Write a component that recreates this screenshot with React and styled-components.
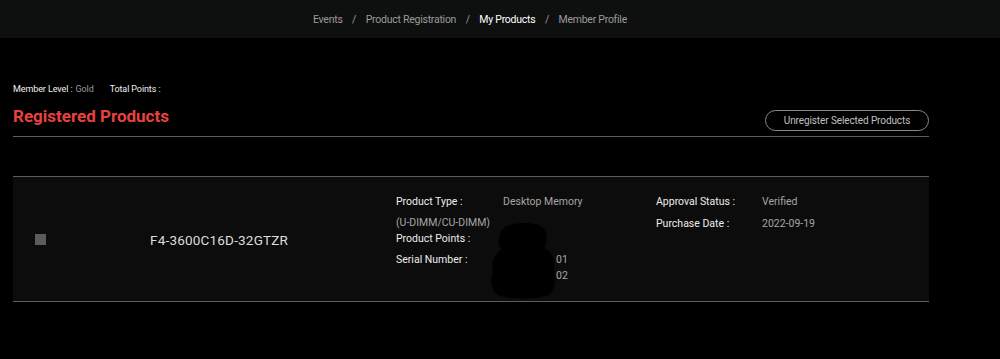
import React from "react";
import styled, { createGlobalStyle } from "styled-components";

const Global = createGlobalStyle`
  html, body { margin: 0; padding: 0; background: #000; }
  body { font-family: "Roboto", "Noto Sans", sans-serif; color: #ddd; }
  * { box-sizing: border-box; }
`;

const Page = styled.div`
  width: 1000px;
  height: 359px;
  background: #000;
  overflow: hidden;
`;

const TopBar = styled.nav`
  height: 38px;
  background: #0e0f0f;
  display: flex;
  align-items: center;
  padding-left: 313px;
  font-size: 10.5px;
  letter-spacing: -0.25px;
`;

const NavItem = styled.span`
  color: ${(p) => (p.$active ? "#ffffff" : "#9c9c9c")};
`;

const Sep = styled.span`
  color: #9c9c9c;
  margin: 0 9.5px;
`;

const Content = styled.main`
  width: 916px;
  margin-left: 13px;
  padding-top: 44px;
`;

const Meta = styled.div`
  display: flex;
  gap: 16px;
  font-size: 9px;
  line-height: 14px;
  color: #f0f0f0;
  letter-spacing: -0.1px;
`;

const MetaValue = styled.span`
  color: #9a9a9a;
  margin-left: 3px;
`;

const HeaderRow = styled.div`
  display: flex;
  align-items: center;
  justify-content: space-between;
  height: 37px;
  margin-top: 4px;
  border-bottom: 1px solid #5c5c5c;
  padding-bottom: 4px;
`;

const Title = styled.h1`
  margin: 0;
  font-size: 17px;
  font-weight: 700;
  color: #e8423f;
`;

const Button = styled.button`
  width: 164px;
  height: 21px;
  border: 1px solid #8a8a8a;
  border-radius: 11px;
  background: transparent;
  color: #c0c0c0;
  font-family: inherit;
  font-size: 10px;
  letter-spacing: -0.1px;
  padding: 0;
  margin-top: 8px;
`;

const Card = styled.section`
  position: relative;
  margin-top: 39px;
  display: grid;
  grid-template-columns: 137px 246px 260px 1fr;
  align-items: center;
  background: #0c0c0c;
  border-top: 1px solid #5c5c5c;
  border-bottom: 1px solid #5c5c5c;
  padding: 17px 0 17px;
`;

const CheckCell = styled.div`
  padding-left: 22px;
  display: flex;
  align-items: center;
`;

const Checkbox = styled.span`
  width: 11px;
  height: 11px;
  background: #5b5b5b;
  display: block;
  margin-top: 1px;
`;

const Model = styled.div`
  font-size: 13.5px;
  color: #dcdcdc;
  letter-spacing: 0.2px;
  margin-top: 2px;
`;

const InfoCol = styled.div`
  align-self: start;
  font-size: 10.5px;
  line-height: 16px;
`;

const Line = styled.div`
  display: flex;
  margin-top: ${(p) => p.$gap || 0}px;
`;

const Label = styled.span`
  width: ${(p) => p.$w || 107}px;
  color: #ececec;
  flex: none;
`;

const Value = styled.span`
  color: #a6a6a6;
  padding-left: ${(p) => p.$indent || 0}px;
`;

const Note = styled.div`
  color: #a6a6a6;
  margin-top: ${(p) => p.$gap || 0}px;
  padding-left: ${(p) => p.$indent || 0}px;
`;

const Redaction = styled.svg`
  position: absolute;
  left: 477px;
  top: 45px;
`;

export default function App() {
  return (
    <Page>
      <Global />
      <TopBar>
        <NavItem>Events</NavItem>
        <Sep>/</Sep>
        <NavItem>Product Registration</NavItem>
        <Sep>/</Sep>
        <NavItem $active>My Products</NavItem>
        <Sep>/</Sep>
        <NavItem>Member Profile</NavItem>
      </TopBar>
      <Content>
        <Meta>
          <span>
            Member Level :<MetaValue>Gold</MetaValue>
          </span>
          <span>Total Points :</span>
        </Meta>
        <HeaderRow>
          <Title>Registered Products</Title>
          <Button>Unregister Selected Products</Button>
        </HeaderRow>
        <Card>
          <CheckCell>
            <Checkbox />
          </CheckCell>
          <Model>F4-3600C16D-32GTZR</Model>
          <InfoCol>
            <Line>
              <Label>Product Type :</Label>
              <Value>Desktop Memory</Value>
            </Line>
            <Note $gap={5}>(U-DIMM/CU-DIMM)</Note>
            <Line>
              <Label>Product Points :</Label>
            </Line>
            <Line $gap={5}>
              <Label>Serial Number :</Label>
              <Value $indent={53}>01</Value>
            </Line>
            <Note $indent={160}>02</Note>
          </InfoCol>
          <InfoCol>
            <Line>
              <Label $w={106}>Approval Status :</Label>
              <Value>Verified</Value>
            </Line>
            <Line $gap={6}>
              <Label $w={106}>Purchase Date :</Label>
              <Value>2022-09-19</Value>
            </Line>
          </InfoCol>
          <Redaction width="70" height="78" viewBox="0 0 70 78">
            <path
              d="M14 6 C20 0 44 -1 52 5 C58 10 58 20 54 26 C62 30 66 38 64 46 C66 56 66 66 60 72 C50 78 20 78 8 73 C1 68 0 58 3 50 C0 42 4 32 11 28 C7 20 8 11 14 6 Z"
              fill="#000"
            />
          </Redaction>
        </Card>
      </Content>
    </Page>
  );
}
